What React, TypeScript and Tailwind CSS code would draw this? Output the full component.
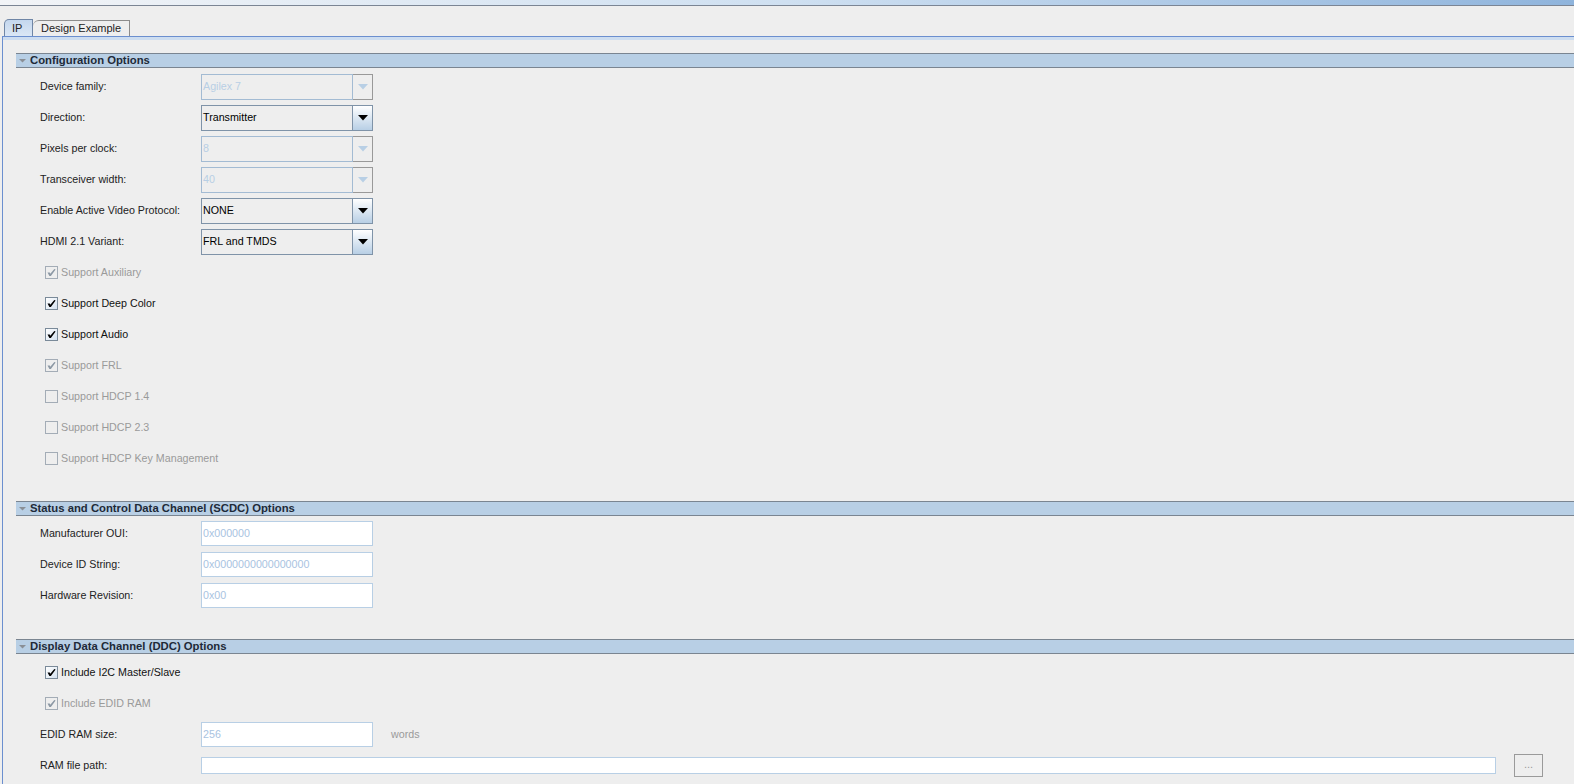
import React from "react";

const font = { fontFamily: '"Liberation Sans", Arial, sans-serif' };

function Arrow({ disabled }: { disabled?: boolean }) {
  return (
    <svg width="10" height="6" viewBox="0 0 10 6">
      <path d="M0 0 L10 0 L5 5.5 Z" fill={disabled ? "#b8cfe5" : "#000"} />
    </svg>
  );
}

function Combo({ value, disabled }: { value: string; disabled?: boolean }) {
  return (
    <div className="flex h-[26px] w-[172px]">
      <div
        className={
          "flex-1 flex items-center pl-[1px] text-[10.7px] border " +
          (disabled ? "border-[#a3bbd3] text-[#b8cfe5]" : "border-[#7f93a8] text-black")
        }
      >
        {value}
      </div>
      <div
        className={
          "w-[20px] flex items-center justify-center border border-l-0 " +
          (disabled ? "border-[#999999]" : "border-[#7f93a8] bg-gradient-to-b from-white to-[#b8cfe5]")
        }
      >
        <Arrow disabled={disabled} />
      </div>
    </div>
  );
}

function Field({ value, w = "w-[172px]", h = "h-[25px]" }: { value?: string; w?: string; h?: string }) {
  return (
    <div className={`${w} ${h} bg-white border border-[#b8cfe5] flex items-center pl-[1px] text-[10.7px] text-[#a9c3df]`}>
      {value}
    </div>
  );
}

function Check({ checked, disabled }: { checked: boolean; disabled?: boolean }) {
  return (
    <div
      className={
        "w-[13px] h-[13px] border flex items-center justify-center " +
        (disabled ? "border-[#a3acb6] bg-[#eeeeee]" : "border-[#7a8a99] bg-gradient-to-br from-white to-[#d5e2f0]")
      }
    >
      {checked && (
        <svg width="9" height="9" viewBox="0 0 9 9">
          <path
            d="M0.5 4.5 L2.8 4.5 L3.3 5.8 L7.3 1 L8.6 1.6 L3.9 8 L2.4 8 Z"
            fill={disabled ? "#8c98a4" : "#000"}
          />
        </svg>
      )}
    </div>
  );
}

function Header({ title }: { title: string }) {
  return (
    <div className="ml-[13px] h-[15px] bg-[#b8cfe5] border-y border-[#7a8591] flex items-center">
      <svg width="14" height="6" viewBox="0 0 14 6">
        <path d="M3 1 L10 1 L6.5 4.5 Z" fill="#8a8f96" />
      </svg>
      <span className="text-[11.3px] font-bold text-[#1e2a38] leading-none">{title}</span>
    </div>
  );
}

function Row({ label, children }: { label: string; children: React.ReactNode }) {
  return (
    <div className="h-[31px] flex items-center">
      <div className="w-[198px] pl-[37px] text-[10.7px] text-[#222]">{label}</div>
      {children}
    </div>
  );
}

function CheckRow({ label, checked, disabled }: { label: string; checked: boolean; disabled?: boolean }) {
  return (
    <div className="h-[31px] flex items-center pl-[42px]">
      <Check checked={checked} disabled={disabled} />
      <span className={"ml-[3px] text-[10.7px] " + (disabled ? "text-[#9a9a9a]" : "text-[#111]")}>{label}</span>
    </div>
  );
}

export default function App() {
  return (
    <div className="w-[1574px] h-[784px] bg-[#eeeeee] overflow-hidden flex flex-col" style={font}>
      {/* window strip */}
      <div className="h-[6px] shrink-0 bg-gradient-to-r from-[#f2f4f7] via-[#cfe0f1] to-[#8fb4dc] border-b border-[#7b8594]" />

      {/* tabs */}
      <div className="h-[30px] shrink-0 flex items-end pl-[4px]">
        <div className="h-[17px] w-[29px] border border-b-0 border-[#6f86a6] rounded-tl-[5px] bg-gradient-to-b from-[#c4d7ee] to-[#dbe7f5] flex items-center pl-[7px] text-[11px] text-[#222]">
          IP
        </div>
        <div className="h-[16px] w-[97px] border border-b-0 border-l-0 border-[#8c8c8c] rounded-tl-[6px] flex items-center pl-[8px] text-[11px] text-[#222]">
          Design Example
        </div>
      </div>

      {/* tab content */}
      <div className="flex-1 border-l border-t border-[#6b8fcf] ml-[2px] flex flex-col">
        <div className="h-[3px] bg-[#cdddf0] shrink-0" />
        <div className="pt-[13px]">
          <Header title="Configuration Options" />
          <div className="pt-[3px]">
            <Row label="Device family:">
              <Combo value="Agilex 7" disabled />
            </Row>
            <Row label="Direction:">
              <Combo value="Transmitter" />
            </Row>
            <Row label="Pixels per clock:">
              <Combo value="8" disabled />
            </Row>
            <Row label="Transceiver width:">
              <Combo value="40" disabled />
            </Row>
            <Row label="Enable Active Video Protocol:">
              <Combo value="NONE" />
            </Row>
            <Row label="HDMI 2.1 Variant:">
              <Combo value="FRL and TMDS" />
            </Row>
            <CheckRow label="Support Auxiliary" checked disabled />
            <CheckRow label="Support Deep Color" checked />
            <CheckRow label="Support Audio" checked />
            <CheckRow label="Support FRL" checked disabled />
            <CheckRow label="Support HDCP 1.4" checked={false} disabled />
            <CheckRow label="Support HDCP 2.3" checked={false} disabled />
            <CheckRow label="Support HDCP Key Management" checked={false} disabled />
          </div>
        </div>

        <div className="pt-[27px]">
          <Header title="Status and Control Data Channel (SCDC) Options" />
          <div className="pt-[2px]">
            <Row label="Manufacturer OUI:">
              <Field value="0x000000" />
            </Row>
            <Row label="Device ID String:">
              <Field value="0x0000000000000000" />
            </Row>
            <Row label="Hardware Revision:">
              <Field value="0x00" />
            </Row>
          </div>
        </div>

        <div className="pt-[28px]">
          <Header title="Display Data Channel (DDC) Options" />
          <div className="pt-[3px]">
            <CheckRow label="Include I2C Master/Slave" checked />
            <CheckRow label="Include EDID RAM" checked disabled />
          </div>
          <Row label="EDID RAM size:">
            <Field value="256" />
            <span className="ml-[18px] text-[10.7px] text-[#9a9a9a]">words</span>
          </Row>
          <Row label="RAM file path:">
            <Field w="w-[1295px]" h="h-[17px]" />
            <div className="ml-[18px] w-[29px] h-[23px] border border-[#9a9a9a] flex items-center justify-center text-[11px] text-[#9a9a9a] pb-[3px]">
              ...
            </div>
          </Row>
        </div>
      </div>
    </div>
  );
}
